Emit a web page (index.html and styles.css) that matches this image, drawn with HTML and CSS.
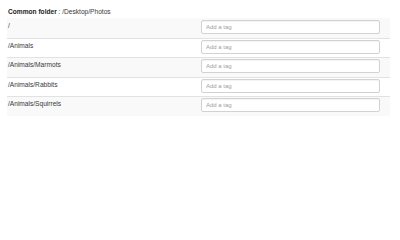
FILE: index.html
```html
<!DOCTYPE html>
<html>
<head>
<meta charset="utf-8">
<link rel="stylesheet" href="styles.css">
</head>
<body>
<div class="page">
  <div class="heading"><strong>Common folder</strong> : /Desktop/Photos</div>
  <table class="folders">
    <colgroup><col class="c-path"><col class="c-tag"></colgroup>
    <tbody>
      <tr><td class="path">/</td><td class="tag"><input type="text" placeholder="Add a tag"></td></tr>
      <tr><td class="path">/Animals</td><td class="tag"><input type="text" placeholder="Add a tag"></td></tr>
      <tr><td class="path">/Animals/Marmots</td><td class="tag"><input type="text" placeholder="Add a tag"></td></tr>
      <tr><td class="path">/Animals/Rabbits</td><td class="tag"><input type="text" placeholder="Add a tag"></td></tr>
      <tr><td class="path">/Animals/Squirrels</td><td class="tag"><input type="text" placeholder="Add a tag"></td></tr>
    </tbody>
  </table>
</div>
</body>
</html>
```

FILE: styles.css
```css
html, body {
  margin: 0;
  padding: 0;
  background: #fff;
}
body {
  font-family: "Liberation Sans", Arial, sans-serif;
  color: #3a3a3a;
  font-size: 6.6px;
  line-height: 10px;
}
.page {
  padding: 7px 0 0 7px;
}
.heading {
  padding-left: 1px;
  margin-bottom: 1px;
  height: 10px;
}
.heading strong {
  font-weight: bold;
  color: #222;
}
.folders {
  border-collapse: collapse;
  table-layout: fixed;
  width: 382.5px;
}
.c-path { width: 194px; }
.c-tag { width: 188.5px; }
.folders td {
  border-top: 1px solid #e2e2e2;
  padding: 1px 0 3.5px 0;
  vertical-align: top;
}
.folders tr:first-child td {
  border-top: 0;
  padding-top: 2px;
}
.folders tr:nth-child(odd) td {
  background: #f9f9f9;
}
.folders td.path {
  padding-left: 1px;
  padding-top: 2px;
}
.folders tr:first-child td.path {
  padding-top: 3px;
}
.folders input {
  display: block;
  box-sizing: border-box;
  width: 179px;
  height: 14px;
  margin: 0;
  padding: 0 4px;
  border: 1px solid #d2d2d2;
  border-radius: 2px;
  background: #fff;
  box-shadow: inset 0 1px 1px rgba(0,0,0,0.05);
  font-family: "Liberation Sans", Arial, sans-serif;
  font-size: 6px;
  color: #555;
}
.folders input::placeholder {
  color: #a0a0a0;
}
```
